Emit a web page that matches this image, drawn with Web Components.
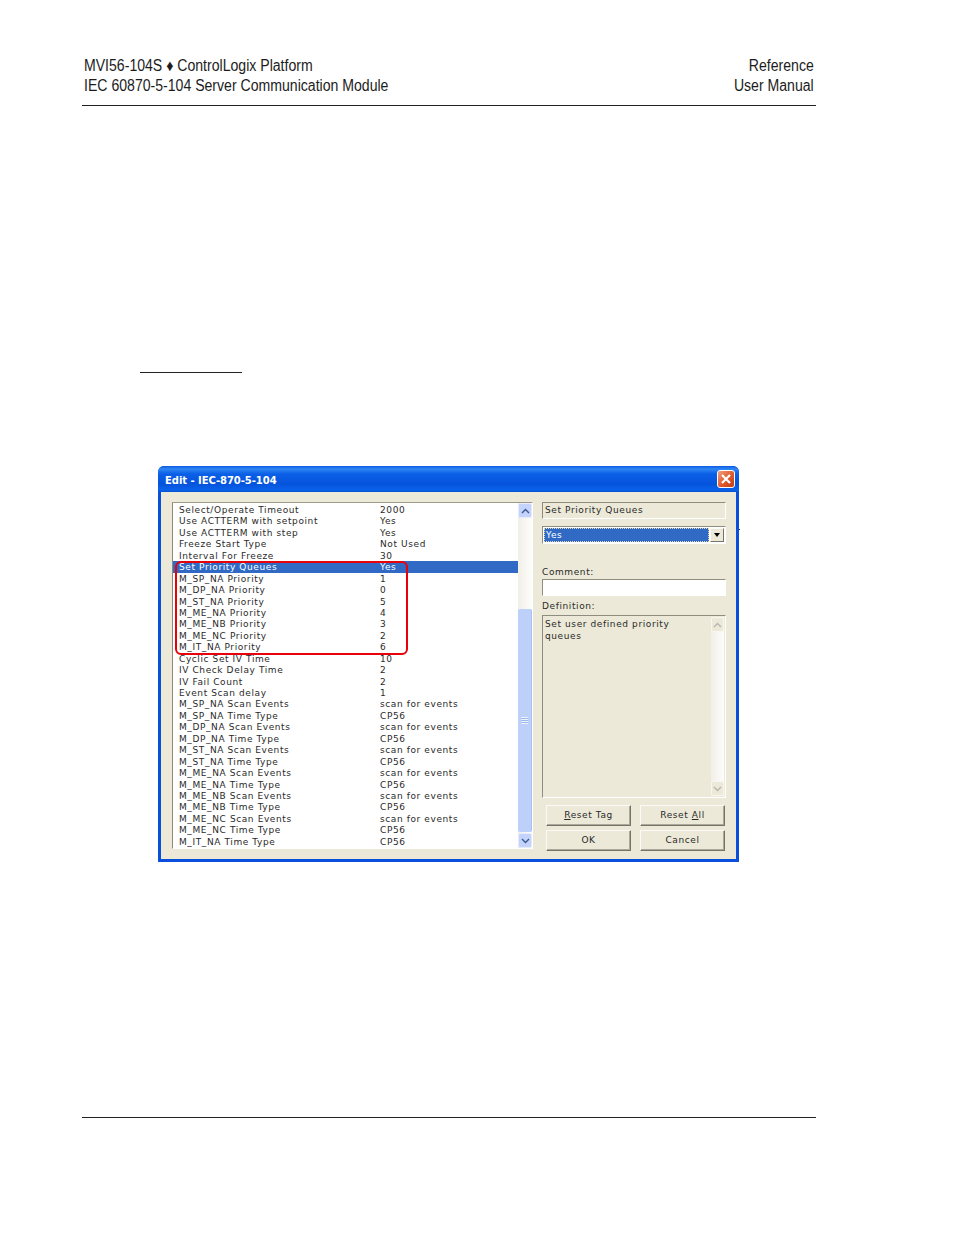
<!DOCTYPE html>
<html>
<head>
<meta charset="utf-8">
<title>Edit - IEC-870-5-104</title>
<style>
  html, body { margin: 0; background: #fff; }
</style>
</head>
<body>
<manual-page>
  <page-header slot="header">
    <span slot="left">MVI56-104S ♦ ControlLogix Platform</span>
    <span slot="left">IEC 60870-5-104 Server Communication Module</span>
    <span slot="right">Reference</span>
    <span slot="right">User Manual</span>
  </page-header>
  <edit-dialog slot="figure" heading="Edit - IEC-870-5-104"></edit-dialog>
</manual-page>

<script>
const xpText = `font-family: "DejaVu Sans", sans-serif; font-size: 9px; letter-spacing: .6px; color: #2a2a2a;`;

const manualPageTemplate = document.createElement( "template" );
manualPageTemplate.innerHTML = `
  <style>
    :host{
      display: block;
      width: 954px;
      height: 1235px;
      overflow: hidden;
    }
    .head{ padding: 0 138px 0 82px; }
    .blank{
      width: 102px;
      height: 0;
      margin: 266px 0 0 140px;
      border-bottom: 1px solid #222;
    }
    .figure{ margin: 93px 0 0 158px; }
    .foot{
      width: 734px;
      margin: 255px 0 0 82px;
      border-top: 1px solid #222;
    }
  </style>
  <div class="head"><slot name="header"></slot></div>
  <div class="blank"></div>
  <div class="figure"><slot name="figure"></slot></div>
  <div class="foot"></div>
`;

class ManualPage extends HTMLElement {
  constructor() {
    super();
    this.attachShadow( {mode:"open"} );
    this.shadowRoot.appendChild( manualPageTemplate.content.cloneNode(true) );
  }
}

const pageHeaderTemplate = document.createElement( "template" );
pageHeaderTemplate.innerHTML = `
  <style>
    :host{
      display: flex;
      justify-content: space-between;
      width: 734px;
      box-sizing: border-box;
      padding: 56px 2px 9px 2px;
      border-bottom: 1px solid #222;
      font: 16px/20px "Liberation Sans", Arial, sans-serif;
      color: #1c1c1c;
    }
    .col{ display: flex; flex-direction: column; white-space: nowrap; }
    .right{ align-items: flex-end; }
    .col ::slotted(span){ transform: scaleX(.88); transform-origin: left center; }
    .right ::slotted(span){ transform-origin: right center; }
  </style>
  <div class="col"><slot name="left"></slot></div>
  <div class="col right"><slot name="right"></slot></div>
`;

class PageHeader extends HTMLElement {
  constructor() {
    super();
    this.attachShadow( {mode:"open"} );
    this.shadowRoot.appendChild( pageHeaderTemplate.content.cloneNode(true) );
  }
}

const scrollBarTemplate = document.createElement( "template" );
scrollBarTemplate.innerHTML = `
  <style>
    :host{
      display: flex;
      flex-direction: column;
      width: 14px;
      background: linear-gradient(90deg, #f1efe6, #fdfdfb);
    }
    .btn{
      height: 15px;
      flex: none;
      box-sizing: border-box;
      display: flex;
      align-items: center;
      justify-content: center;
      background: #c3d3fb;
      border: 1px solid #e6ecfd;
      border-radius: 2px;
    }
    .track{ flex: 1; display: flex; flex-direction: column; min-height: 0; }
    .thumb{
      margin-top: var(--thumb-top, 91px);
      flex: 1;
      display: flex;
      align-items: center;
      justify-content: center;
      background: #bdd0fa;
      border-radius: 2px;
      border-right: 1px solid #aac0f2;
      margin-bottom: 1px;
    }
    .grip{
      width: 7px;
      height: 7px;
      background: repeating-linear-gradient(180deg, #eef3fe 0 1px, #9db6ec 1px 2px);
    }
    svg{ display: block; }
    path{ fill: none; stroke: #3b5a8e; stroke-width: 1.4; }
    :host([disabled]) .btn{ background: #ece9d8; border-color: #f7f6f0; }
    :host([disabled]) path{ stroke: #b9b7aa; }
    :host([disabled]) .thumb{ background: none; border: 0; }
    :host([disabled]) .grip{ display: none; }
  </style>
  <div class="btn"><svg width="9" height="6"><path d="M1 5L4.500 1.500L8 5"/></svg></div>
  <div class="track"><div class="thumb"><div class="grip"></div></div></div>
  <div class="btn"><svg width="9" height="6"><path d="M1 1L4.500 4.500L8 1"/></svg></div>
`;

class ScrollBar extends HTMLElement {
  constructor() {
    super();
    this.attachShadow( {mode:"open"} );
    this.shadowRoot.appendChild( scrollBarTemplate.content.cloneNode(true) );
  }
}

const tagListTemplate = document.createElement( "template" );
tagListTemplate.innerHTML = `
  <style>
    :host{
      display: flex;
      position: relative;
      box-sizing: border-box;
      width: 361px;
      height: 347px;
      border: 1px solid;
      border-color: #9d9a8a #fff #fff #8c8a7c;
      background: #fff;
      ${xpText}
    }
    .rows{ flex: 1; padding-top: 1px; overflow: hidden; }
    .row{
      display: grid;
      grid-template-columns: 201px 1fr;
      padding-left: 6px;
      height: 11.45px;
      line-height: 13px;
      white-space: nowrap;
    }
    .row.sel{ background: #316ac5; color: #fff; }
    .ring{
      position: absolute;
      left: 2px;
      top: 58px;
      width: 229px;
      height: 90px;
      border: 2px solid #e8000b;
      border-radius: 6px;
      pointer-events: none;
    }
  </style>
  <div class="rows"></div>
  <scroll-bar></scroll-bar>
  <div class="ring"></div>
`;

class TagList extends HTMLElement {
  constructor() {
    super();
    this.attachShadow( {mode:"open"} );
    this.shadowRoot.appendChild( tagListTemplate.content.cloneNode(true) );
  }

  connectedCallback() {
    const rows = this.shadowRoot.querySelector( ".rows" );
    tagRows.forEach( ([name, value]) => {
      const row = document.createElement( "div" );
      row.className = "row";
      if ( name == "Set Priority Queues" ) row.classList.add( "sel" );
      [name, value].forEach( t => {
        const cell = document.createElement( "span" );
        cell.textContent = t;
        row.appendChild( cell );
      });
      rows.appendChild( row );
    });
  }
}

const tagRows = [
  ["Select/Operate Timeout", "2000"],
  ["Use ACTTERM with setpoint", "Yes"],
  ["Use ACTTERM with step", "Yes"],
  ["Freeze Start Type", "Not Used"],
  ["Interval For Freeze", "30"],
  ["Set Priority Queues", "Yes"],
  ["M_SP_NA Priority", "1"],
  ["M_DP_NA Priority", "0"],
  ["M_ST_NA Priority", "5"],
  ["M_ME_NA Priority", "4"],
  ["M_ME_NB Priority", "3"],
  ["M_ME_NC Priority", "2"],
  ["M_IT_NA Priority", "6"],
  ["Cyclic Set IV Time", "10"],
  ["IV Check Delay Time", "2"],
  ["IV Fail Count", "2"],
  ["Event Scan delay", "1"],
  ["M_SP_NA Scan Events", "scan for events"],
  ["M_SP_NA Time Type", "CP56"],
  ["M_DP_NA Scan Events", "scan for events"],
  ["M_DP_NA Time Type", "CP56"],
  ["M_ST_NA Scan Events", "scan for events"],
  ["M_ST_NA Time Type", "CP56"],
  ["M_ME_NA Scan Events", "scan for events"],
  ["M_ME_NA Time Type", "CP56"],
  ["M_ME_NB Scan Events", "scan for events"],
  ["M_ME_NB Time Type", "CP56"],
  ["M_ME_NC Scan Events", "scan for events"],
  ["M_ME_NC Time Type", "CP56"],
  ["M_IT_NA Time Type", "CP56"],
];

const xpButtonTemplate = document.createElement( "template" );
xpButtonTemplate.innerHTML = `
  <style>
    :host{
      display: flex;
      align-items: center;
      justify-content: center;
      box-sizing: border-box;
      width: 85px;
      height: 21px;
      padding-bottom: 2px;
      background: #ece9d8;
      border: 1px solid;
      border-color: #fbfaf6 #77756a #77756a #fbfaf6;
      box-shadow: inset -1px -1px 0 #aca899;
      ${xpText}
    }
  </style>
  <slot></slot>
`;

class XpButton extends HTMLElement {
  constructor() {
    super();
    this.attachShadow( {mode:"open"} );
    this.shadowRoot.appendChild( xpButtonTemplate.content.cloneNode(true) );
  }
}

const editDialogTemplate = document.createElement( "template" );
editDialogTemplate.innerHTML = `
  <style>
    :host{
      display: block;
      box-sizing: border-box;
      position: relative;
      width: 581px;
      height: 396px;
      background: #0a4fdc;
      border-radius: 6px 6px 0 0;
      ${xpText}
    }
    .title{
      display: flex;
      align-items: center;
      justify-content: space-between;
      height: 26px;
      padding: 0 4px 0 7px;
      border-radius: 6px 6px 0 0;
      background: linear-gradient(180deg, #0a5ae0 0, #2f86f2 3px, #0b5fe6 8px, #0553dc 18px, #0a63ea 24px, #0650d0 26px);
      color: #fff;
      font-size: 10px;
      font-weight: bold;
      letter-spacing: -.05px;
    }
    .heading{ padding-top: 2px; }
    .close{
      width: 18px;
      height: 18px;
      box-sizing: border-box;
      border: 1px solid #fff;
      border-radius: 3px;
      background: linear-gradient(135deg, #f0a080, #de5a2c 55%, #c23a16);
    }
    .close svg{ display: block; }
    .body{
      display: grid;
      grid-template-columns: 361px 184px;
      column-gap: 9px;
      height: 367px;
      margin: 0 3px;
      padding: 10px 0 0 11px;
      box-sizing: border-box;
      background: #ece9d8;
    }
    .side{ display: flex; flex-direction: column; }
    .sunk{
      box-sizing: border-box;
      border: 1px solid;
      border-color: #8f8d7f #fff #fff #8f8d7f;
      padding-left: 2px;
    }
    .tag{ height: 17px; line-height: 15px; }
    .combo{
      display: flex;
      height: 18px;
      margin-top: 7px;
      padding: 1px;
      background: #fff;
    }
    .combo .val{
      flex: 1;
      background: #316ac5;
      color: #fff;
      line-height: 15px;
      outline: 1px dotted #e6d9a8;
      outline-offset: -1px;
      padding-left: 2px;
    }
    .combo .arrow{
      width: 14px;
      margin-left: 1px;
      box-sizing: border-box;
      border: 1px solid;
      border-color: #fbfaf6 #77756a #77756a #fbfaf6;
      display: flex;
      align-items: center;
      justify-content: center;
      background: #ece9d8;
    }
    .combo .arrow i{
      border: 3.5px solid transparent;
      border-top: 4px solid #000;
      border-bottom: 0;
    }
    label{ display: block; line-height: 11px; }
    .comment{ height: 17px; margin-top: 1px; background: #fff; }
    .def{
      display: flex;
      height: 183px;
      margin-top: 3px;
      line-height: 11.5px;
    }
    .def div{ flex: 1; padding: 3px 0 0 0; }
    .def scroll-bar{ margin: 1px 1px 1px 0; width: 13px; }
    .btns{
      display: grid;
      grid-template-columns: 85px 85px;
      justify-content: space-between;
      row-gap: 4px;
      margin: 7px 1px 0 4px;
    }
    .tick{ position: absolute; left: 581px; top: 63px; width: 1px; height: 1px; background: #334; }
  </style>
  <div class="title">
    <span class="heading"></span>
    <div class="close"><svg width="16" height="16"><path d="M4 4L12 12M12 4L4 12" stroke="#fff" stroke-width="2.200" fill="none"/></svg></div>
  </div>
  <div class="body">
    <tag-list></tag-list>
    <div class="side">
      <div class="sunk tag">Set Priority Queues</div>
      <div class="sunk combo"><div class="val">Yes</div><div class="arrow"><i></i></div></div>
      <label style="margin-top:23px">Comment:</label>
      <div class="sunk comment"></div>
      <label style="margin-top:5px">Definition:</label>
      <div class="sunk def">
        <div>Set user defined priority<br>queues</div>
        <scroll-bar disabled></scroll-bar>
      </div>
      <div class="btns">
        <xp-button><span><u>R</u>eset Tag</span></xp-button>
        <xp-button><span>Reset <u>A</u>ll</span></xp-button>
        <xp-button><span>OK</span></xp-button>
        <xp-button><span>Cancel</span></xp-button>
      </div>
    </div>
  </div>
  <div class="tick"></div>
`;

class EditDialog extends HTMLElement {
  constructor() {
    super();
    this.attachShadow( {mode:"open"} );
    this.shadowRoot.appendChild( editDialogTemplate.content.cloneNode(true) );
  }

  connectedCallback() {
    this.shadowRoot.querySelector( ".heading" ).textContent = this.getAttribute( "heading" );
  }
}

window.customElements.define( "manual-page", ManualPage );
window.customElements.define( "page-header", PageHeader );
window.customElements.define( "scroll-bar", ScrollBar );
window.customElements.define( "tag-list", TagList );
window.customElements.define( "xp-button", XpButton );
window.customElements.define( "edit-dialog", EditDialog );
</script>
</body>
</html>
